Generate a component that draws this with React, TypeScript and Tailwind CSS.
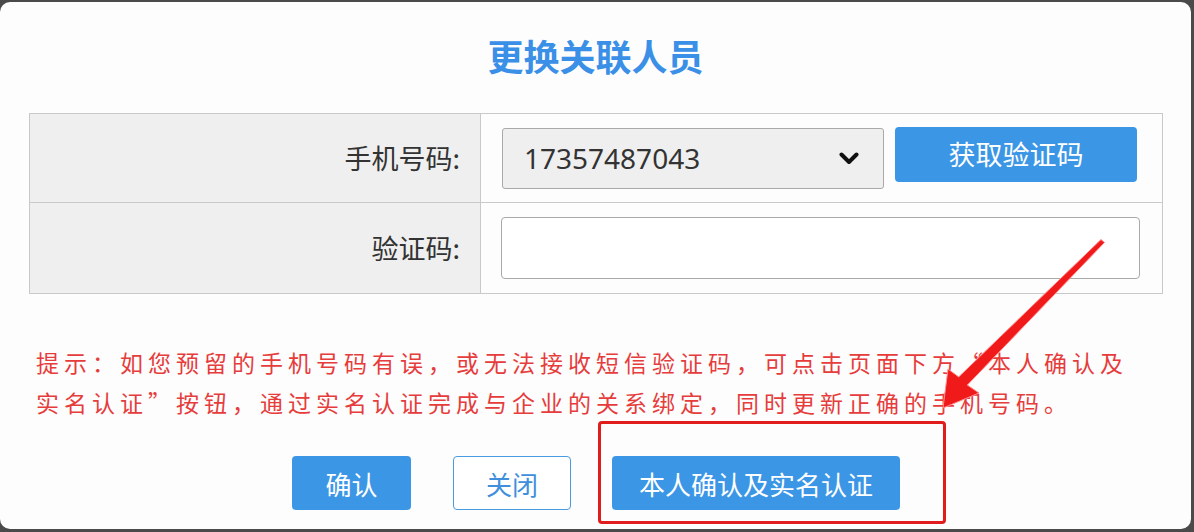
import React from "react";

const cjk = { fontFamily: '"Noto Sans CJK SC", "Noto Sans", sans-serif' };
const num = { fontFamily: '"Noto Sans", "Noto Sans CJK SC", sans-serif' };

export default function App() {
  return (
    <div className="w-[1194px] h-[532px] bg-[#4a4a4a] pt-[2px] pb-[3px] pr-[3px] overflow-hidden" style={cjk}>
      <div className="relative h-full bg-[#fdfdfd] rounded-[10px] flex flex-col">
        <div className="pt-[28px] h-[78px] text-center text-[36px] leading-[50px] font-bold text-[#3a8fe6]">
          更换关联人员
        </div>

        <div className="mt-[33px] mx-[29px] mr-[28px] border border-[#c9c9c9]">
          <div className="flex h-[89px] border-b border-[#c9c9c9]">
            <div className="w-[451px] bg-[#efefef] border-r border-[#c9c9c9] flex items-center justify-end pr-[20px] text-[27px] text-[#333]">
              手机号码:
            </div>
            <div className="flex-1 flex items-center pl-[21px] gap-[11px]">
              <div className="w-[382px] h-[61px] bg-[#efefef] border border-[#a9a9a9] rounded-[3px] flex items-center pl-[21px] pr-[24px] justify-between">
                <span className="text-[28px] text-[#333]" style={num}>17357487043</span>
                <svg width="20" height="13" viewBox="0 0 20 13">
                  <polyline points="2.5,2.5 10,10 17.5,2.5" fill="none" stroke="#111" strokeWidth="4" strokeLinecap="round" strokeLinejoin="round" />
                </svg>
              </div>
              <div className="w-[242px] h-[55px] mb-[8px] bg-[#3b96e6] rounded-[4px] flex items-center justify-center text-white text-[27px]">
                获取验证码
              </div>
            </div>
          </div>
          <div className="flex h-[90px]">
            <div className="w-[451px] bg-[#efefef] border-r border-[#c9c9c9] flex items-center justify-end pr-[20px] text-[27px] text-[#333]">
              验证码:
            </div>
            <div className="flex-1 flex items-center pl-[20px]">
              <div className="w-[639px] h-[62px] bg-white border border-[#a9a9a9] rounded-[4px]" />
            </div>
          </div>
        </div>

        <div className="mt-[48px] pl-[36px] text-[23px] leading-[40px] tracking-[5px] font-normal text-[#e63c3c]">
          <div className="whitespace-nowrap">提示：如您预留的手机号码有误，或无法接收短信验证码，可点击页面下方“本人确认及</div>
          <div className="whitespace-nowrap">实名认证”按钮，通过实名认证完成与企业的关系绑定，同时更新正确的手机号码。</div>
        </div>

        <div className="mt-[-1px] ml-[292px] flex items-start">
          <div className="mt-[35px] w-[119px] h-[54px] bg-[#3b96e6] rounded-[4px] flex items-center justify-center text-white text-[26px]">
            确认
          </div>
          <div className="mt-[35px] ml-[42px] w-[118px] h-[54px] bg-white border border-[#4a9ae2] rounded-[4px] flex items-center justify-center text-[#3f8fdc] text-[26px]">
            关闭
          </div>
          <div className="ml-[27px] w-[348px] h-[103px] border-[3px] border-[#e01c1c] rounded-[4px] pt-[32px] pl-[11px]">
            <div className="w-[288px] h-[54px] bg-[#3b96e6] rounded-[4px] flex items-center justify-center text-white text-[26px]">
              本人确认及实名认证
            </div>
          </div>
        </div>

        <svg className="absolute left-0 top-[-2px] pointer-events-none" width="1194" height="532" viewBox="0 0 1194 532">
          <polygon
            points="1101,239.5 958.7,376.9 948,369 943,408 979,393 967.3,385.1 1104.5,242.5"
            fill="#f01a1a"
            stroke="#ff9090"
            strokeWidth="1"
            strokeLinejoin="round"
          />
        </svg>
      </div>
    </div>
  );
}
